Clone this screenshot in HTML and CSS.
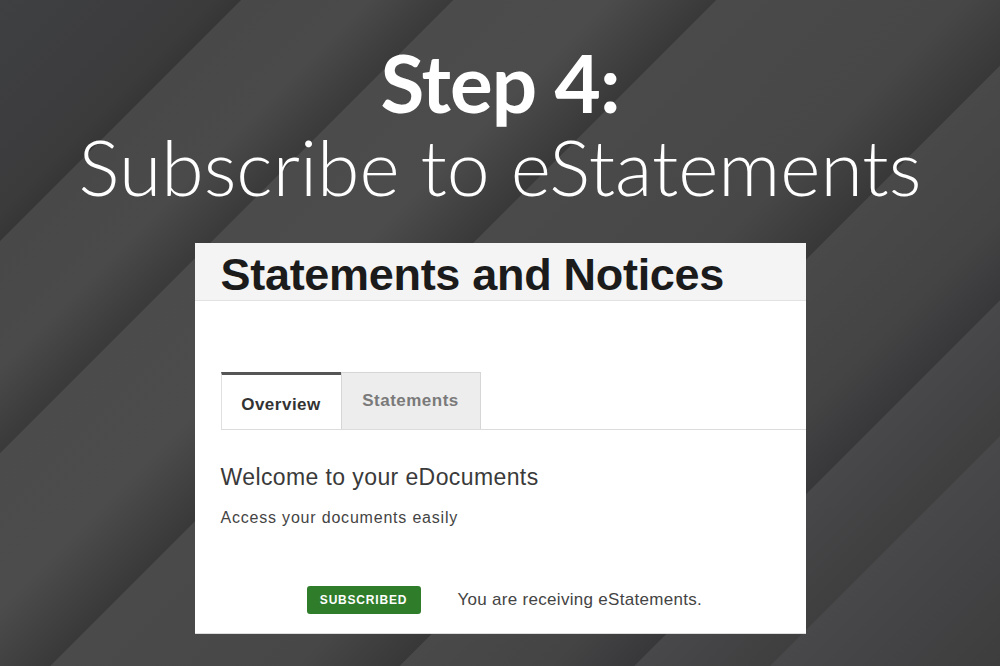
FILE: index.html
```html
<!DOCTYPE html>
<html lang="en">
<head>
    <meta charset="UTF-8">
    <meta name="viewport" content="width=device-width, initial-scale=1.0">
    <title>Step 4: Subscribe to eStatements</title>
    <link rel="stylesheet" href="styles.css">
</head>
<body>
    <div class="slide">
        <h1 class="headline">
            <span class="step">Step 4:</span>
            <span class="sub">Subscribe to eStatements</span>
        </h1>

        <div class="card">
            <div class="card-header">
                <h2>Statements and Notices</h2>
            </div>
            <div class="card-body">
                <div class="tabs">
                    <div class="tab active">Overview</div>
                    <div class="tab">Statements</div>
                </div>
                <h3 class="welcome">Welcome to your eDocuments</h3>
                <p class="lead">Access your documents easily</p>
                <div class="status">
                    <span class="badge">Subscribed</span>
                    <span class="status-text">You are receiving eStatements.</span>
                </div>
            </div>
        </div>
    </div>
</body>
</html>
```

FILE: styles.css
```css
body {
    margin: 0;
    font-family: "Liberation Sans", Arial, sans-serif;
    background: #3c3c3d;
}
.slide {
    width: 1000px;
    height: 666px;
    overflow: hidden;
    padding-top: 40px;
    box-sizing: border-box;
    background: linear-gradient(135deg,
        #3f4042 0, #3b3b3c 150px, #363637 170px,
        #484849 171px, #4a4a4b 260px, #3a3a3b 320px,
        #4b4b4c 321px, #4c4c4d 430px, #39393a 506px,
        #4a4a4b 507px, #474748 680px, #383839 753px,
        #49494a 754px, #444445 860px, #38383a 919px,
        #48484a 920px, #3f3f40 1015px,
        #48484a 1016px, #3d3d3e 100%);
}
.headline {
    margin: 0;
    text-align: center;
    color: #fff;
    font-family: Lato, "Open Sans", sans-serif;
    line-height: 84px;
}
.headline span {
    display: block;
}
.step {
    font-size: 80px;
    font-weight: 700;
    letter-spacing: -1px;
}
.sub {
    font-size: 77px;
    font-weight: 300;
}
.card {
    width: 611px;
    margin: 35px auto 0;
    background: #fff;
    border-bottom: 1px solid #ddd;
}
.card-header {
    height: 58px;
    background: #f4f4f4;
    border-bottom: 1px solid #e2e2e2;
    padding: 6px 0 0 26px;
    box-sizing: border-box;
}
.card-header h2 {
    margin: 0;
    font-size: 45px;
    line-height: 51px;
    font-weight: 700;
    letter-spacing: -0.3px;
    color: #1b1b1b;
}
.card-body {
    padding: 71px 0 19px 26px;
}
.tabs {
    display: flex;
    height: 57px;
    border-bottom: 1px solid #dcdcdc;
}
.tab {
    width: 140px;
    box-sizing: border-box;
    padding-top: 18px;
    line-height: 20px;
    font-size: 17px;
    font-weight: 700;
    letter-spacing: 0.5px;
    text-align: center;
    color: #7a7a7a;
    background: #ededed;
    border: 1px solid #d6d6d6;
    border-bottom: none;
}
.tab.active {
    width: 120px;
    padding-top: 20px;
    color: #333;
    background: #fff;
    border: none;
    border-top: 3px solid #555;
    border-left: 1px solid #e0e0e0;
}
.welcome {
    margin: 33px 0 0;
    font-size: 23px;
    line-height: 28px;
    font-weight: 400;
    letter-spacing: 0.4px;
    color: #3a3a3a;
}
.lead {
    margin: 17px 0 0;
    font-size: 16px;
    line-height: 20px;
    letter-spacing: 0.8px;
    color: #444;
}
.status {
    display: flex;
    align-items: center;
    gap: 37px;
    margin: 58px 0 0 86px;
}
.badge {
    width: 114px;
    height: 28px;
    line-height: 28px;
    text-align: center;
    background: #2f7d2b;
    border-radius: 3px;
    color: #fff;
    font-size: 12px;
    font-weight: 700;
    letter-spacing: 0.8px;
    text-transform: uppercase;
}
.status-text {
    font-size: 17px;
    letter-spacing: 0.3px;
    color: #444;
}
```
